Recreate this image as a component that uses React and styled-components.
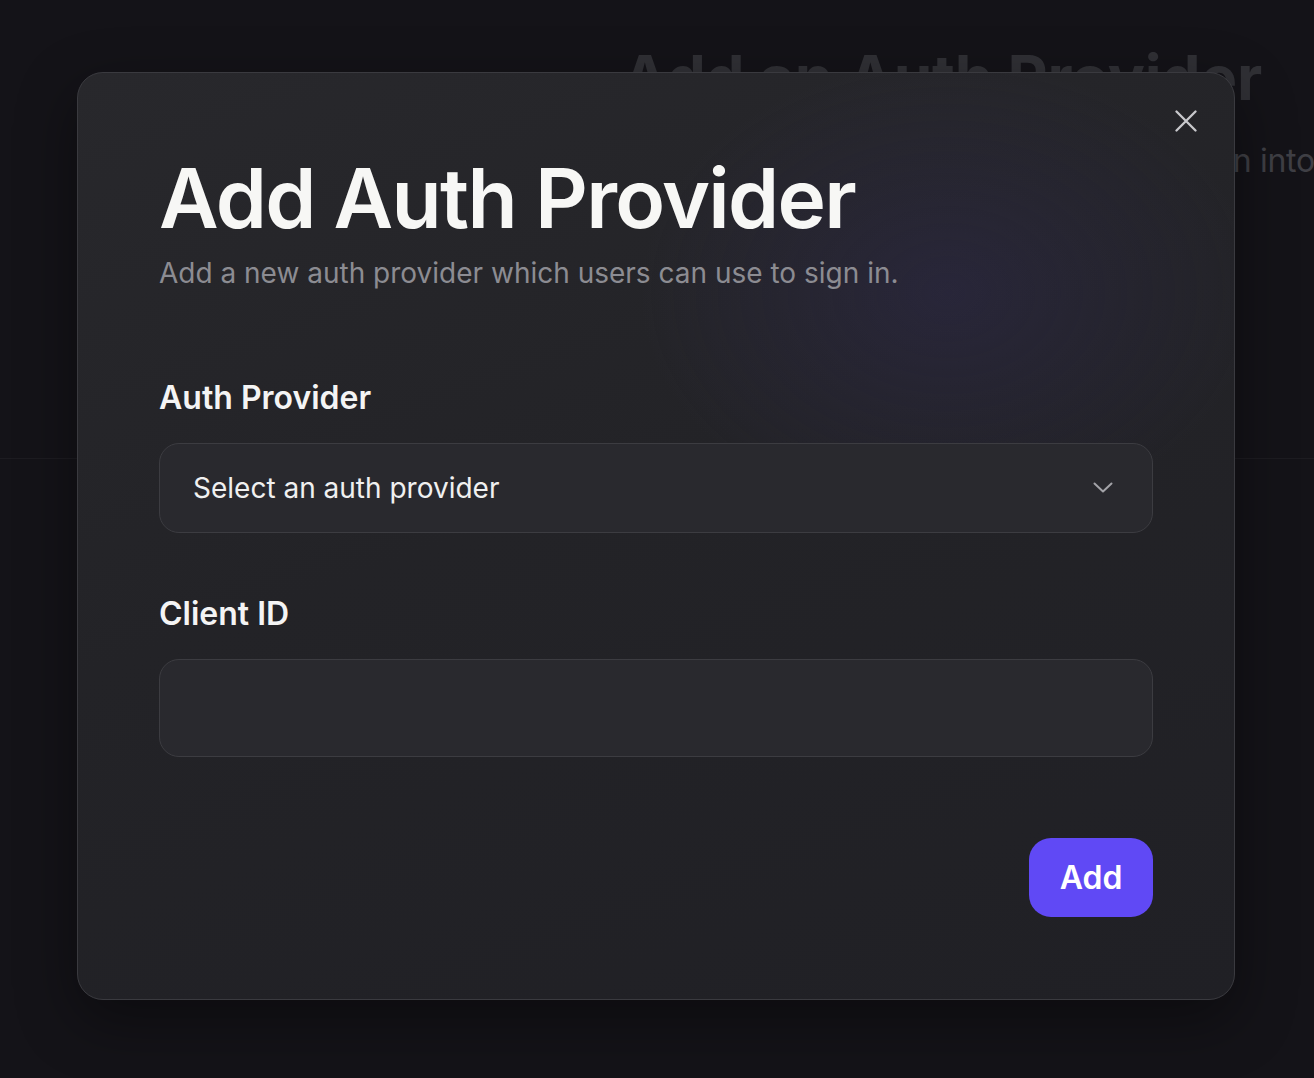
import React from 'react'
import styled, { createGlobalStyle } from 'styled-components'

const GlobalStyle = createGlobalStyle`
  html, body {
    margin: 0;
    padding: 0;
    background: #151419;
    font-family: Inter, "Noto Sans", sans-serif;
    -webkit-font-smoothing: antialiased;
  }
`

const Page = styled.div`
  position: relative;
  width: 100%;
  height: 1078px;
  overflow: hidden;
  background: #17161b;
`

const PageHeader = styled.header`
  padding: 44px 0 0 622px;
  height: 459px;
  box-sizing: border-box;
  border-bottom: 1px solid #222126;
  white-space: nowrap;
`

const PageTitle = styled.h1`
  margin: 0;
  font-size: 62px;
  font-weight: 700;
  letter-spacing: -0.2px;
  line-height: 1.1;
  color: #3a3a3f;
`

const PageSubtitle = styled.p`
  margin: 30px 0 0;
  font-size: 32px;
  line-height: 1.2;
  letter-spacing: -0.3px;
  color: #4d4d53;
`

const Overlay = styled.div`
  position: absolute;
  inset: 0;
  background: rgba(10, 10, 14, 0.2);
`

const Modal = styled.div`
  position: absolute;
  left: 77px;
  top: 72px;
  width: 1158px;
  box-sizing: border-box;
  padding: 85px 81px 82px;
  border: 1px solid #3a3a3f;
  border-radius: 26px;
  background:
    radial-gradient(ellipse 440px 330px at 870px 220px, rgba(48, 42, 86, 0.38), rgba(48, 42, 86, 0) 70%),
    linear-gradient(160deg, #28282c 0%, #232327 45%, #202025 100%);
  box-shadow: 0 20px 60px rgba(0, 0, 0, 0.4);
  display: flex;
  flex-direction: column;
`

const CloseButton = styled.button`
  position: absolute;
  top: 34px;
  right: 34px;
  width: 28px;
  height: 28px;
  padding: 0;
  border: none;
  background: none;
  color: #c9c9cd;
  display: flex;
  align-items: center;
  justify-content: center;
  cursor: pointer;
`

const Title = styled.h2`
  margin: 0;
  font-size: 82px;
  font-weight: 600;
  line-height: 1;
  letter-spacing: -1.7px;
  color: #f7f7f5;
`

const Subtitle = styled.p`
  margin: 17px 0 0;
  font-size: 28px;
  line-height: 1.2;
  color: #8c8c92;
`

const Field = styled.div`
  display: flex;
  flex-direction: column;
  gap: 26px;
  margin-top: ${p => p.$top}px;
`

const Label = styled.label`
  font-size: 32px;
  font-weight: 600;
  line-height: 1.2;
  color: #f4f4f4;
`

const SelectBox = styled.div`
  height: 90px;
  box-sizing: border-box;
  padding: 0 39px 0 33px;
  border: 1.5px solid #3c3c41;
  border-radius: 20px;
  background: #29292e;
  display: flex;
  align-items: center;
  justify-content: space-between;
  font-size: 28px;
  color: #f0f0f0;
  cursor: pointer;
`

const Chevron = styled.span`
  color: #a3a3a8;
  display: flex;
`

const Input = styled.input`
  height: 98px;
  box-sizing: border-box;
  padding: 0 33px;
  border: 1.5px solid #3c3c41;
  border-radius: 20px;
  background: #29292e;
  font-family: inherit;
  font-size: 28px;
  color: #f0f0f0;
  outline: none;
`

const Footer = styled.div`
  display: flex;
  justify-content: flex-end;
  margin-top: 81px;
`

const AddButton = styled.button`
  width: 124px;
  height: 79px;
  border: none;
  border-radius: 22px;
  background: #6049f5;
  color: #ffffff;
  font-family: inherit;
  font-size: 32px;
  font-weight: 600;
  cursor: pointer;
`

const App = () => {
  return (
    <>
      <GlobalStyle />
      <Page>
        <PageHeader>
          <PageTitle>Add an Auth Provider</PageTitle>
          <PageSubtitle>Choose a provider which users can sign in into your app with.</PageSubtitle>
        </PageHeader>
        <Overlay />
        <Modal role="dialog">
          <CloseButton aria-label="Close">
            <svg width="22" height="22" viewBox="0 0 22 22" fill="none" stroke="currentColor" strokeWidth="2.3" strokeLinecap="round">
              <path d="M1.5 1.5 L20.5 20.5 M20.5 1.5 L1.5 20.5" />
            </svg>
          </CloseButton>
          <Title>Add Auth Provider</Title>
          <Subtitle>Add a new auth provider which users can use to sign in.</Subtitle>
          <Field $top={88}>
            <Label>Auth Provider</Label>
            <SelectBox>
              <span>Select an auth provider</span>
              <Chevron>
                <svg width="20" height="11" viewBox="0 0 20 11" fill="none" stroke="currentColor" strokeWidth="2" strokeLinecap="round" strokeLinejoin="round">
                  <path d="M1.5 1.5 L10 9.5 L18.5 1.5" />
                </svg>
              </Chevron>
            </SelectBox>
          </Field>
          <Field $top={62}>
            <Label>Client ID</Label>
            <Input type="text" />
          </Field>
          <Footer>
            <AddButton>Add</AddButton>
          </Footer>
        </Modal>
      </Page>
    </>
  )
}

export default App
